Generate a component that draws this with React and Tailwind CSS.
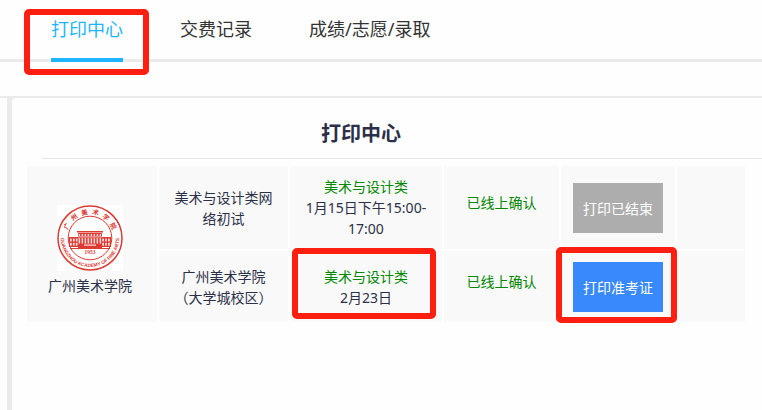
import React from 'react';

const TABS = [
  { label: '打印中心', active: true },
  { label: '交费记录' },
  { label: '成绩/志愿/录取' },
];

const ROWS = [
  {
    exam: '美术与设计类网络初试',
    subject: '美术与设计类',
    time: <>1月15日下午15:00-<wbr />17:00</>,
    status: '已线上确认',
    action: '打印已结束',
    ended: true,
  },
  {
    exam: '广州美术学院（大学城校区）',
    subject: '美术与设计类',
    time: '2月23日',
    status: '已线上确认',
    action: '打印准考证',
    marked: true,
  },
];

// Red frame laid over whatever needs attention
const Marker = ({ className }) => (
  <span className={`absolute border-6 border-[#ff1f10] rounded-[5px] pointer-events-none z-10 ${className}`} />
);

const SealLogo = () => {
  const chars = ['广', '州', '美', '术', '学', '院'];
  const windows = [-10.8, -7.8, -4.8, -1.8, 1.2, 4.2, 7.2, 10.2];
  const wings = [-19.5, -16.6, -13.7, 12.7, 15.6, 18.5];

  return (
    <svg viewBox="-33 -33 66 66" className="w-[66px] h-[66px] bg-white" fill="none" role="img" aria-label="广州美术学院">
      <circle r="32" stroke="#dc3a34" strokeWidth="1.5" />
      <circle r="21.8" stroke="#dc3a34" strokeWidth="1" />
      <g fill="#dc3a34" fontSize="6.5" fontWeight="700" fontFamily="'Noto Sans CJK SC', sans-serif" textAnchor="middle">
        {chars.map((c, i) => (
          <text key={c} y="-23.8" transform={`rotate(${i * 25 - 62.5})`}>{c}</text>
        ))}
      </g>
      <path id="seal-arc" d="M-28.6 -6A29.2 29.2 0 1 0 28.6 -6" />
      <text fill="#dc3a34" fontSize="4.8" fontWeight="700" fontFamily="'Liberation Sans', sans-serif" textAnchor="middle">
        <textPath href="#seal-arc" startOffset="50%">GUANGZHOU ACADEMY OF FINE ARTS</textPath>
      </text>
      {/* Building */}
      <g fill="#dc3a34">
        <path d="M-13 -7H13V-5.4H-13zM-12 -5H12V10H-12zM-21 -1H-12V9H-21zM12 -1H21V9H12z" />
        <path d="M-20 10H20V11H-20z" />
      </g>
      <g fill="#fff">
        {windows.map((x) => (
          <React.Fragment key={x}>
            <rect x={x - 0.6} y="-4" width="1.5" height="2.2" opacity="0.8" />
            <rect x={x - 0.6} y="0.2" width="1.5" height="5.4" opacity="0.8" />
          </React.Fragment>
        ))}
        {wings.map((x) => (
          <React.Fragment key={x}>
            <rect x={x - 0.5} y="0.6" width="1.8" height="2.8" opacity="0.8" />
            <rect x={x - 0.5} y="4.8" width="1.8" height="2.8" opacity="0.8" />
          </React.Fragment>
        ))}
        <rect x="-12" y="-1.4" width="24" height="0.7" />
        <rect x="-6" y="6.6" width="12" height="1" />
      </g>
      <text y="16.4" fill="#dc3a34" fontSize="5.5" fontWeight="700" fontFamily="'Liberation Serif', serif" textAnchor="middle">1953</text>
    </svg>
  );
};

const App = () => {
  return (
    <div className="min-h-screen flex flex-col bg-[#fefefe] text-[#2b3048] font-['Noto_Sans','Noto_Sans_CJK_SC',sans-serif]">
      <nav className="flex gap-[57px] pl-[51px] border-b-3 border-[#ebebeb] whitespace-nowrap">
        {TABS.map((tab) => (
          <a
            key={tab.label}
            href="#"
            className={`relative h-[62px] -mb-[3px] text-lg leading-[58px] ${tab.active ? 'text-[#1eb5ff] border-b-4 border-[#1eb5ff]' : 'text-[#333333]'}`}
          >
            {tab.label}
            {tab.active && <Marker className="top-[9px] -bottom-[17px] -left-[27px] -right-[26px]" />}
          </a>
        ))}
      </nav>

      <div className="mt-[34px] grow flex gap-[5px] pt-0.5 bg-[#ebebeb]">
        <div className="w-[7px] shrink-0 bg-[#fefefe]" />
        <main className="grow bg-[#fefefe] rounded-tl pt-5">
          <h1 className="pr-[52px] text-xl leading-8 font-bold text-center">打印中心</h1>
          <hr className="mt-2 ml-[30px] border-[#e6e6e6]" />

          <div className="mt-[5px] ml-[13px] mr-[15px]">
            <table className="w-full table-fixed border-separate border-spacing-0.5 text-sm leading-[21px] text-center">
              <colgroup>
                <col className="w-[130px]" />
                <col className="w-[129px]" />
                <col className="w-[152px]" />
                <col className="w-[115px]" />
                <col className="w-[114px]" />
                <col />
              </colgroup>
              <tbody>
                {ROWS.map((row, i) => (
                  <tr key={row.exam}>
                    {i === 0 && (
                      <td rowSpan={2} className="bg-[#f9f9f9] pt-3 pr-1">
                        <div className="flex flex-col items-center gap-1">
                          <SealLogo />
                          <span>广州美术学院</span>
                        </div>
                      </td>
                    )}
                    <td className="bg-[#f9f9f9] px-3.5">{row.exam}</td>
                    <td className="relative bg-[#f9f9f9] px-3 py-2.5">
                      <p className="text-[#008800]">{row.subject}</p>
                      <p>{row.time}</p>
                      {row.marked && <Marker className="-top-[3px] bottom-[3px] left-0.5 right-1.5" />}
                    </td>
                    <td className="bg-[#f9f9f9] pb-2.5 text-[#008800]">{row.status}</td>
                    <td className="relative bg-[#f9f9f9] pt-[11px] pb-2.5">
                      <button
                        disabled={row.ended}
                        className={`block mx-auto w-[90px] h-[50px] text-white ${row.ended ? 'bg-[#adadad]' : 'bg-[#3889fb]'}`}
                      >
                        {row.action}
                      </button>
                      {row.marked && <Marker className="-top-1 -bottom-px -left-[5px] -right-0.5" />}
                    </td>
                    <td className="bg-[#f9f9f9]" />
                  </tr>
                ))}
              </tbody>
            </table>
          </div>
        </main>
      </div>
    </div>
  );
};

export default App;
